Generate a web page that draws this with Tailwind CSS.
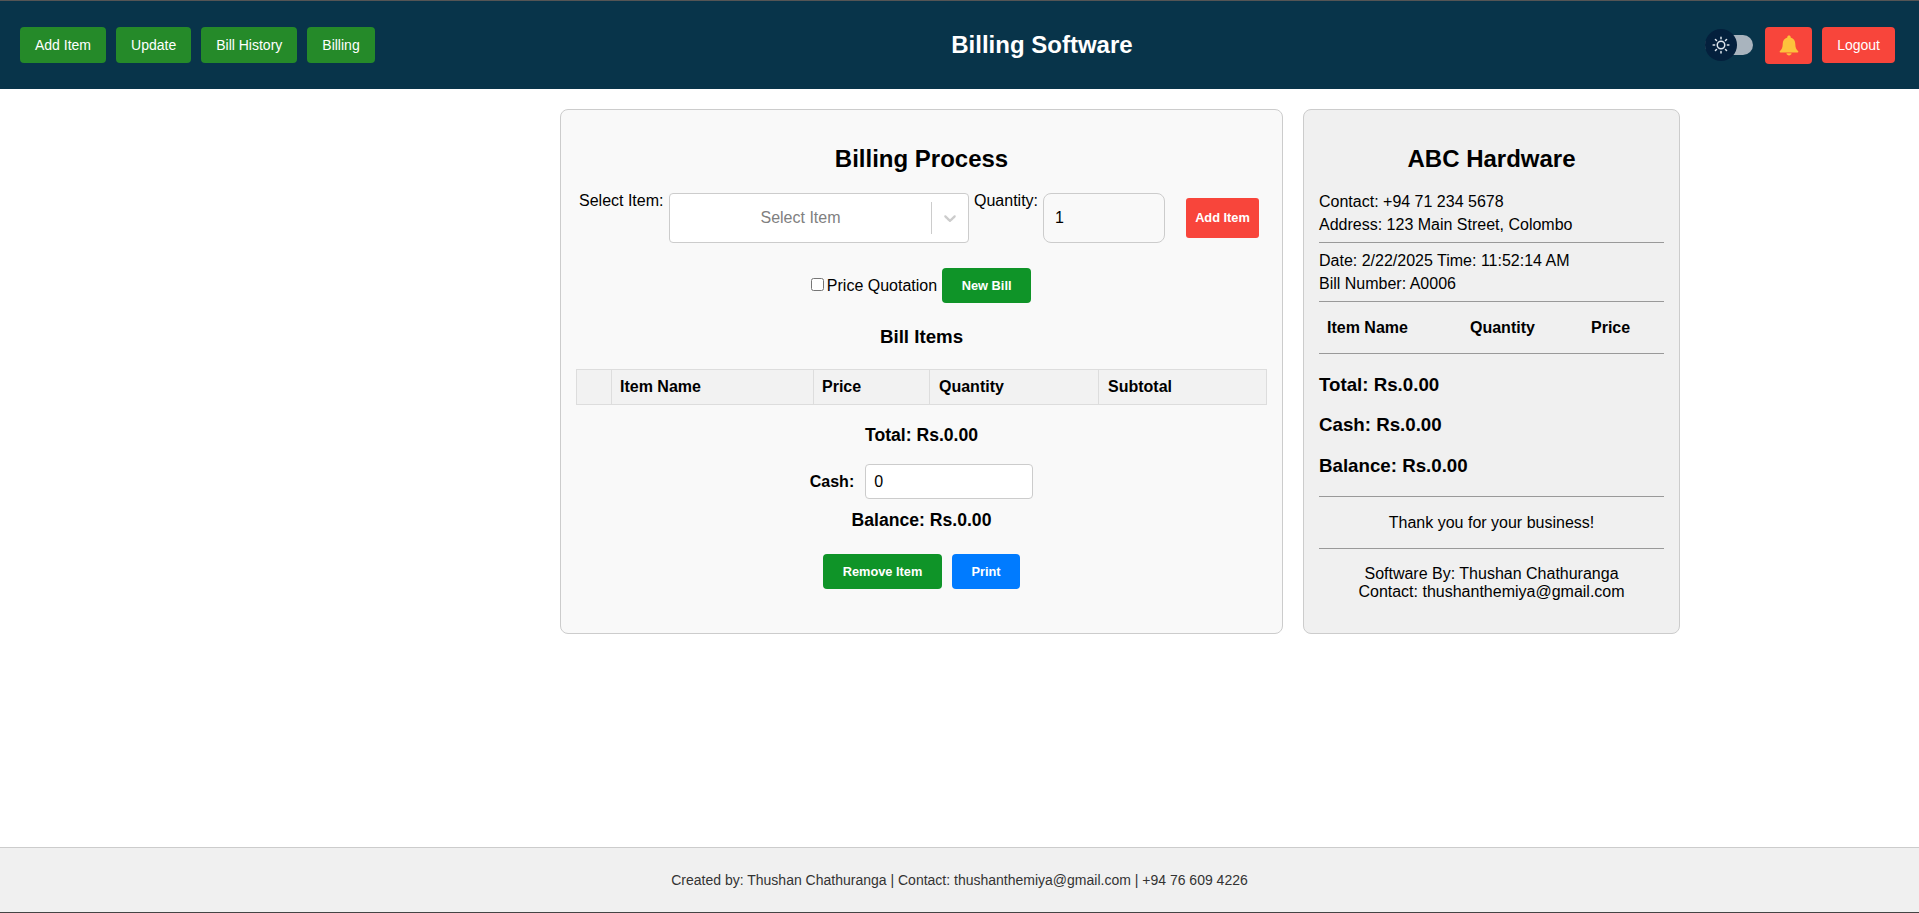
<!DOCTYPE html>
<html lang="en">
<head>
    <meta charset="UTF-8">
    <title>Billing Software</title>
    <script src="https://cdn.jsdelivr.net/npm/@tailwindcss/browser@4"></script>
</head>
<body class="h-screen flex flex-col bg-white text-black font-['Liberation_Sans',Arial,sans-serif] text-[16px] overflow-hidden">
    <!-- Navbar -->
    <header class="h-[89px] shrink-0 border-t border-[#555] bg-[#08344a] flex items-center justify-between pl-5 pr-6">
        <nav class="flex items-center gap-2.5 text-[14px] text-white">
            <button class="h-9 px-[15px] rounded bg-[#258a29]">Add Item</button>
            <button class="h-9 px-[15px] rounded bg-[#258a29]">Update</button>
            <button class="h-9 px-[15px] rounded bg-[#258a29]">Bill History</button>
            <button class="h-9 px-[15px] rounded bg-[#258a29]">Billing</button>
        </nav>
        <h1 class="ml-1 text-[24px] leading-7 font-bold text-white">Billing Software</h1>
        <div class="flex items-center">
            <!-- Theme toggle -->
            <div class="relative w-12 h-5 mr-3 rounded-full bg-[#a9b4be]">
                <div class="absolute left-0 -top-1.5 w-8 h-8 rounded-full bg-[#04203d] flex items-center justify-center">
                    <svg class="w-[18px] h-[18px] text-[#dfe6ee]" viewBox="0 0 24 24" fill="none" stroke="currentColor" stroke-width="2" stroke-linecap="round">
                        <circle cx="12" cy="12" r="5"></circle>
                        <path d="M12 1.5v2M12 20.5v2M1.5 12h2M20.5 12h2M4.6 4.6l1.4 1.4M18 18l1.4 1.4M4.6 19.4L6 18M18 6l1.4-1.4"></path>
                    </svg>
                </div>
            </div>
            <button class="w-[47px] h-[37px] mr-2.5 rounded bg-[#f8453b] flex items-center justify-center">
                <svg class="w-5 h-[21px] text-[#fdc23c]" viewBox="0 0 20 21" fill="currentColor">
                    <path d="M10 0.5c1 0 1.7.7 1.7 1.7v.4c2.9.8 4.6 3.3 4.6 6.4 0 3.4.8 5.2 2.9 7.3.4.5.1 1.2-.6 1.2H1.4c-.7 0-1-.7-.6-1.2 2.1-2.1 2.9-3.9 2.9-7.3 0-3.1 1.7-5.600 4.600-6.400v-.4C8.300 1.200 9 .5 10 .5z"></path>
                    <path d="M7.400 18.300h5.200c-.2 1.300-1.300 2.200-2.600 2.200s-2.400-.9-2.600-2.200z"></path>
                </svg>
            </button>
            <button class="h-9 px-[15px] rounded bg-[#f8453b] text-[14px] text-white">Logout</button>
        </div>
    </header>

    <!-- Main -->
    <main class="flex-1 flex items-start gap-5 pt-5 pl-[560px]">
        <!-- Billing form -->
        <section class="w-[723px] h-[525px] border border-[#ccc] rounded-lg bg-[#f9f9f9] px-[15px] pt-[35px]">
            <h2 class="text-[24px] leading-7 font-bold text-center">Billing Process</h2>
            <div class="flex items-start mt-5 pl-[3px]">
                <label class="w-[90px] leading-[18px] -mt-px">Select Item:</label>
                <div class="w-[300px] h-[50px] shrink-0 border border-[#ccc] rounded bg-white flex items-center">
                    <span class="flex-1 text-center text-[#808080]">Select Item</span>
                    <span class="w-px h-8 bg-[#ccc]"></span>
                    <span class="w-9 flex justify-center">
                        <svg class="w-5 h-5 text-[#ccc]" viewBox="0 0 20 20" fill="currentColor">
                            <path d="M4.516 7.548c.436-.446 1.043-.481 1.576 0L10 11.295l3.908-3.747c.533-.481 1.141-.446 1.574 0 .436.445.408 1.197 0 1.615-.406.418-4.695 4.502-4.695 4.502a1.095 1.095 0 0 1-1.576 0S5.000 9.581 4.516 9.163c-.409-.418-.436-1.170 0-1.615z"></path>
                        </svg>
                    </span>
                </div>
                <label class="w-[74px] shrink-0 pl-[5px] leading-[18px] -mt-px">Quantity:</label>
                <input type="text" value="1" class="w-[122px] h-[50px] shrink-0 border border-[#ccc] rounded-lg px-[11px] bg-[#f9f9f9] outline-none">
                <button class="w-[73px] h-10 mt-[5px] ml-[21px] shrink-0 rounded-[3px] bg-[#f8453b] text-white text-[12.8px] font-bold">Add Item</button>
            </div>
            <div class="flex items-center justify-center mt-[25px] h-[35px] pr-px">
                <input type="checkbox" class="w-[13px] h-[13px] mr-[3px] -mt-0.5">
                <span>Price Quotation</span>
                <button class="w-[89px] h-[35px] ml-[5px] rounded bg-[#0f9428] text-white text-[12.8px] font-bold">New Bill</button>
            </div>
            <h3 class="text-[18.72px] leading-[22px] font-bold text-center mt-[23px]">Bill Items</h3>
            <table class="w-[691px] mt-[21px] table-fixed border-collapse">
                <colgroup>
                    <col class="w-[35px]"><col class="w-[202px]"><col class="w-[116px]"><col class="w-[169px]"><col>
                </colgroup>
                <thead>
                    <tr class="h-[35px] bg-[#f2f2f2] text-left">
                        <th class="border border-[#ddd] px-2"></th>
                        <th class="border border-[#ddd] px-2">Item Name</th>
                        <th class="border border-[#ddd] px-2">Price</th>
                        <th class="border border-[#ddd] pl-[9px] pr-2">Quantity</th>
                        <th class="border border-[#ddd] pl-[9px] pr-2">Subtotal</th>
                    </tr>
                </thead>
            </table>
            <p class="mt-5 text-[17.6px] leading-5 font-bold text-center">Total: Rs.0.00</p>
            <div class="flex items-center justify-center mt-[19px]">
                <label class="font-bold mr-[11px]">Cash:</label>
                <input type="text" value="0" class="w-[168px] h-[35px] border border-[#ccc] rounded px-2 bg-white outline-none">
            </div>
            <p class="mt-[11px] text-[17.6px] leading-5 font-bold text-center">Balance: Rs.0.00</p>
            <div class="flex justify-center gap-2.5 mt-6">
                <button class="w-[119px] h-[35px] rounded bg-[#0f9428] text-white text-[12.8px] font-bold">Remove Item</button>
                <button class="w-[68px] h-[35px] rounded bg-[#007bff] text-white text-[12.8px] font-bold">Print</button>
            </div>
        </section>

        <!-- Bill preview -->
        <aside class="w-[377px] h-[525px] border border-[#ccc] rounded-lg bg-[#f0f0f0] px-[15px] pt-[35px]">
            <h2 class="text-[24px] leading-7 font-bold text-center">ABC Hardware</h2>
            <div class="mt-[17px] leading-[23px]">
                <p>Contact: +94 71 234 5678</p>
                <p>Address: 123 Main Street, Colombo</p>
            </div>
            <hr class="mt-1.5 border-[#999]">
            <div class="mt-1.5 leading-[23px]">
                <p>Date: 2/22/2025 Time: 11:52:14 AM</p>
                <p>Bill Number: A0006</p>
            </div>
            <hr class="mt-1.5 border-[#999]">
            <table class="w-full table-fixed text-left">
                <colgroup><col class="w-[143px]"><col class="w-[121px]"><col></colgroup>
                <thead>
                    <tr class="h-[51px]">
                        <th class="px-2">Item Name</th>
                        <th class="px-2">Quantity</th>
                        <th class="px-2">Price</th>
                    </tr>
                </thead>
            </table>
            <hr class="border-[#999]">
            <p class="mt-5 text-[18.72px] leading-[22px] font-bold">Total: Rs.0.00</p>
            <p class="mt-[18px] text-[18.72px] leading-[22px] font-bold">Cash: Rs.0.00</p>
            <p class="mt-[19px] text-[18.72px] leading-[22px] font-bold">Balance: Rs.0.00</p>
            <hr class="mt-[19px] border-[#999]">
            <p class="mt-4 leading-5 text-center">Thank you for your business!</p>
            <hr class="mt-[15px] border-[#999]">
            <div class="mt-4 leading-[18px] text-center">
                <p>Software By: Thushan Chathuranga</p>
                <p>Contact: thushanthemiya@gmail.com</p>
            </div>
        </aside>
    </main>

    <!-- Footer -->
    <footer class="h-[66px] shrink-0 border-t border-t-[#ccc] border-b border-b-[#444] bg-[#f0f0f0] flex items-center justify-center text-[14px] text-[#333]">
        Created by: Thushan Chathuranga | Contact: thushanthemiya@gmail.com | +94 76 609 4226
    </footer>
</body>
</html>
